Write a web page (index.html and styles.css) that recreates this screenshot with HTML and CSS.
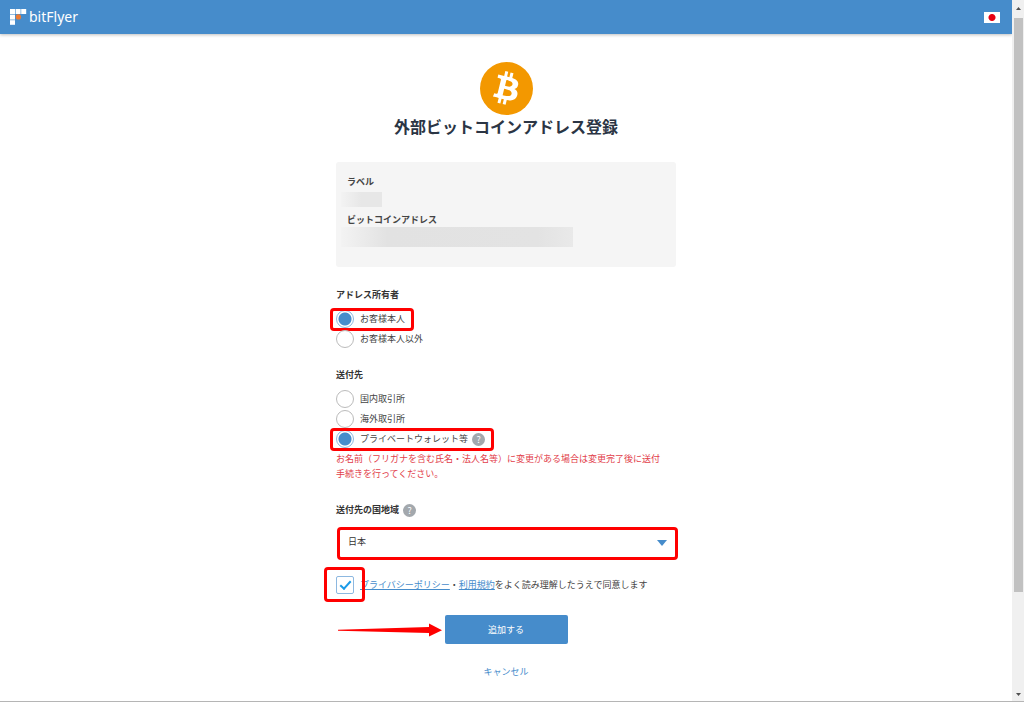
FILE: index.html
```
<!DOCTYPE html>
<html lang="ja">
<head>
    <meta charset="UTF-8">
    <title>外部ビットコインアドレス登録</title>
    <link rel="stylesheet" href="styles.css">
</head>
<body>
<div class="page">
    <header class="header">
        <a class="logo" href="#">
            <svg width="17" height="16" viewBox="0 0 17 16">
                <g fill="#fff">
                    <rect x="0" y="0" width="5" height="5"/>
                    <rect x="5.6" y="0" width="5" height="5"/>
                    <rect x="11.2" y="0" width="5" height="5"/>
                    <rect x="0" y="5.6" width="5" height="5"/>
                    <rect x="0" y="11.2" width="5" height="4.6"/>
                </g>
                <circle cx="8.4" cy="7.9" r="2.7" fill="#ef7b32"/>
            </svg>
            <span>bitFlyer</span>
        </a>
        <button class="flag" type="button" aria-label="日本語"></button>
    </header>

    <main class="content">
        <svg class="coin" viewBox="0 0 64 64">
            <circle cx="32" cy="32" r="32" fill="#f39800"/>
            <path fill="#fff" d="M46.1 27.4c.6-4.3-2.6-6.6-7.1-8.1l1.4-5.8-3.5-.9-1.4 5.7-2.8-.7 1.4-5.7-3.5-.9-1.4 5.8-2.3-.5-4.8-1.2-.9 3.8s2.6.6 2.5.6c1.4.4 1.7 1.3 1.6 2l-3.9 15.9c-.2.4-.6 1.1-1.6.8 0 .1-2.5-.6-2.5-.6l-1.7 4 4.5 1.1 2.5.7-1.5 5.8 3.5.9 1.4-5.8 2.8.8-1.4 5.7 3.5.9 1.4-5.8c6 1.1 10.5.7 12.4-4.7 1.5-4.4-.1-6.9-3.2-8.5 2.3-.5 4-2 4.5-5.1zm-8 11.2c-1.1 4.4-8.4 2-10.8 1.4l1.9-7.7c2.4.6 10 1.8 8.9 6.3zm1.1-11.3c-1 4-7.1 2-9 1.5l1.7-7c2 .5 8.4 1.4 7.3 5.5z"/>
        </svg>
        <h1>外部ビットコインアドレス登録</h1>

        <dl class="summary">
            <dt>ラベル</dt>
            <dd class="masked masked-label"></dd>
            <dt>ビットコインアドレス</dt>
            <dd class="masked masked-address"></dd>
        </dl>

        <form>
            <fieldset>
                <legend>アドレス所有者</legend>
                <label class="option marked"><input type="radio" name="owner" checked>お客様本人</label>
                <label class="option"><input type="radio" name="owner">お客様本人以外</label>
            </fieldset>

            <fieldset>
                <legend>送付先</legend>
                <label class="option"><input type="radio" name="dest">国内取引所</label>
                <label class="option"><input type="radio" name="dest">海外取引所</label>
                <label class="option marked"><input type="radio" name="dest" checked>プライベートウォレット等<span class="help">?</span></label>
                <p class="notice">お名前（フリガナを含む氏名・法人名等）に変更がある場合は変更完了後に送付<br>手続きを行ってください。</p>
            </fieldset>

            <div class="country">
                <label class="title" for="country">送付先の国地域<span class="help">?</span></label>
                <div class="select marked">
                    <select id="country">
                        <option>日本</option>
                    </select>
                    <svg width="10" height="6" viewBox="0 0 10 6"><path d="M0 0h10L5 6z" fill="#468ccb"/></svg>
                </div>
            </div>

            <div class="agree">
                <span class="check marked"><input type="checkbox" id="agree" checked></span>
                <label for="agree"><a href="#">プライバシーポリシー</a>・<a href="#">利用規約</a>をよく読み理解したうえで同意します</label>
            </div>

            <div class="actions">
                <svg class="arrow" width="104" height="14" viewBox="0 0 104 14"><path d="M0 6.8L91 4V.6L104 7.3 91 13.6V10L0 7.8z" fill="#f00"/></svg>
                <button class="submit" type="submit">追加する</button>
            </div>
            <a class="cancel" href="#">キャンセル</a>
        </form>
    </main>
</div>

<div class="scrollbar">
    <svg width="5" height="3" viewBox="0 0 5 3"><path d="M0 3h5L2.5 0z" fill="#505050"/></svg>
    <div class="track"><div class="thumb"></div></div>
    <svg width="5" height="3" viewBox="0 0 5 3"><path d="M0 0h5L2.5 3z" fill="#505050"/></svg>
</div>
</body>
</html>
```
FILE: styles.css
```
* {
    box-sizing: border-box;
}

body {
    display: flex;
    min-height: 100vh;
    margin: 0;
    border-bottom: 1px solid #b5b5b5;
    background: #fff;
    color: #444;
    font-family: "Noto Sans CJK JP", sans-serif;
    font-size: 9px;
    line-height: 16px;
}

a {
    color: #468ccb;
}

.page {
    flex: 1;
}

.header {
    display: flex;
    align-items: center;
    justify-content: space-between;
    height: 34px;
    padding: 0 12px 0 10px;
    background: #468ccb;
    box-shadow: 0 1px 3px rgba(0, 0, 0, 0.25);
}

.logo {
    display: flex;
    align-items: center;
    gap: 2px;
    color: #fff;
    font-family: "Noto Sans", sans-serif;
    font-size: 14px;
    text-decoration: none;
}

.flag {
    width: 16px;
    height: 11px;
    padding: 0;
    border: 0;
    background: radial-gradient(circle, #e60012 3px, #fff 4px);
}

.content {
    width: 340px;
    margin: 0 auto;
    padding: 28px 0 20px;
}

.coin {
    display: block;
    width: 53px;
    height: 53px;
    margin: 0 auto;
}

h1 {
    margin: 0;
    color: #2b3544;
    font-size: 16px;
    line-height: 22px;
    text-align: center;
}

/* registered address */
.summary {
    height: 105px;
    margin: 25px 0 20px;
    padding: 13px 11px;
    border-radius: 3px;
    background: #f5f5f5;
}

.summary dt {
    font-weight: bold;
    line-height: 14px;
}

.masked {
    margin: 0 0 0 -6px;
}

.masked-label {
    width: 41px;
    height: 15px;
    margin-top: 3px;
    margin-bottom: 6px;
    background: linear-gradient(to right, #f3f3f3, #e7e7e7 50%);
}

.masked-address {
    width: 232px;
    height: 20px;
    background: linear-gradient(to right, #f3f3f3, #e2e2e2 20%, #e3e3e3 85%, #e9e9e9);
}

/* form */
fieldset {
    min-width: 0;
    margin: 0 0 18px;
    padding: 0;
    border: 0;
}

legend,
.title {
    display: flex;
    align-items: center;
    height: 16px;
    margin-bottom: 6px;
    padding: 0;
    color: #333;
    font-weight: bold;
}

.option {
    display: flex;
    align-items: center;
    position: relative;
    width: max-content;
    height: 20px;
}

input {
    flex: none;
    width: 18px;
    height: 18px;
    margin: 0;
    border: 1px solid #bbb;
    background: #fff;
    appearance: none;
}

input[type="radio"] {
    margin-right: 6px;
    border-radius: 50%;
}

input[type="radio"]:checked {
    border-color: #8db8e0;
    background: radial-gradient(circle, #468ccb 6px, #fff 7px);
}

.help {
    display: inline-block;
    width: 13px;
    height: 13px;
    margin-left: 4px;
    border-radius: 50%;
    background: #a3a8ad;
    color: #fff;
    font-weight: normal;
    line-height: 13px;
    text-align: center;
}

.notice {
    margin: 2px 0 0;
    color: #e2404a;
    line-height: 15px;
}

.country {
    margin-top: 21px;
}

.select {
    position: relative;
    margin-top: 9px;
}

.select select {
    display: block;
    width: 100%;
    height: 33px;
    padding: 0 12px 4px;
    border: 0;
    background: #fff;
    color: #333;
    font: inherit;
    appearance: none;
}

.select svg {
    position: absolute;
    top: 13px;
    right: 9px;
}

.agree {
    display: flex;
    align-items: center;
    gap: 6px;
    height: 20px;
    margin-top: 15px;
}

.check {
    position: relative;
    height: 18px;
}

.check input {
    display: block;
    border-color: #8db8e0;
    border-radius: 2px;
}

.check input:checked::before {
    content: "";
    box-sizing: border-box;
    display: block;
    width: 11px;
    height: 6px;
    margin: 4px 3px;
    border: solid #1a9be8;
    border-width: 0 0 2px 2px;
    transform: rotate(-48deg);
}

/* red frames */
.marked::after {
    content: "";
    position: absolute;
    border: 3px solid #f00;
    border-radius: 4px;
    pointer-events: none;
}

.option.marked::after {
    inset: -1px -9px -2px -6px;
}

.select.marked::after {
    inset: 0 -2px 0 1px;
}

.check.marked::after {
    inset: -9px -11px -8px -12px;
}

.actions {
    display: flex;
    align-items: center;
    justify-content: center;
    position: relative;
    margin: 20px 0;
}

.arrow {
    position: absolute;
    left: 2px;
}

.submit {
    width: 123px;
    height: 29px;
    padding: 0;
    border: 0;
    border-radius: 2px;
    background: #468ccb;
    color: #fff;
    font: inherit;
}

.cancel {
    display: block;
    text-align: center;
    text-decoration: none;
}

/* window scrollbar */
.scrollbar {
    display: flex;
    flex-direction: column;
    align-items: center;
    width: 12px;
    padding: 7px 0 5px;
    background: #f0f0f0;
}

.track {
    flex: 1;
    width: 9px;
    margin: 8px 0;
}

.thumb {
    height: 86%;
    background: #c1c1c1;
}
```
